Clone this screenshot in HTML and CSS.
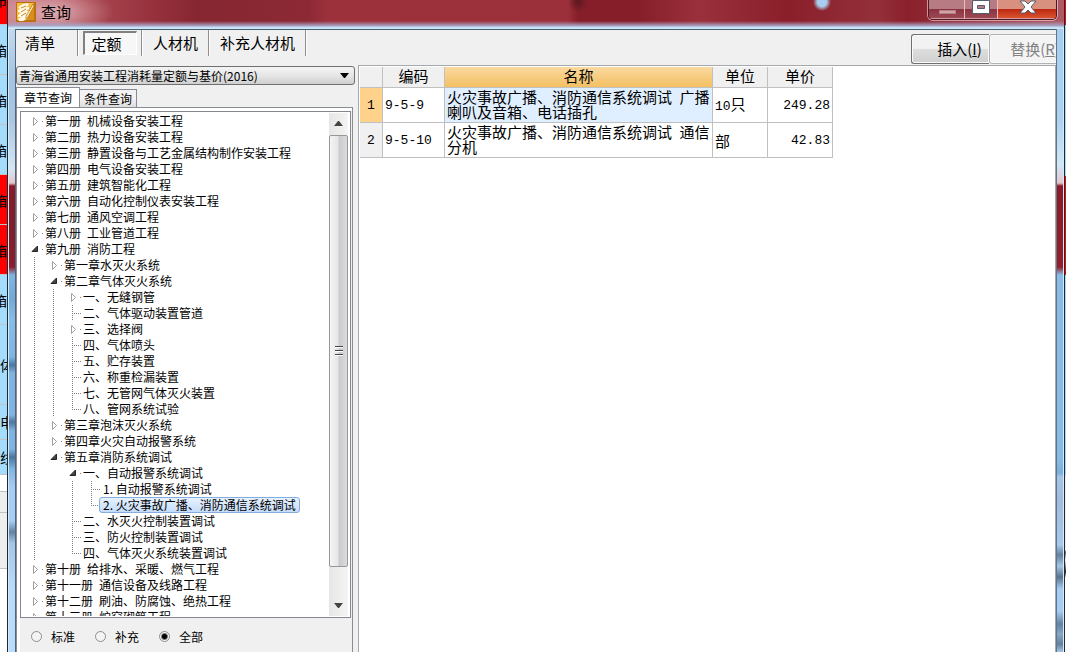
FILE: index.html
```
<!DOCTYPE html>
<html lang="zh-CN">
<head>
<meta charset="utf-8">
<title>查询</title>
<link rel="stylesheet" href="styles.css">
</head>
<body>
<div class="desktop">
  <div class="sheet" aria-hidden="true">
    <div class="cell red h25 up">布</div>
    <div class="cell h50">箱</div>
    <div class="cell h50">箱</div>
    <div class="cell h50">箱</div>
    <div class="cell red h50">箱</div>
    <div class="cell red h50">箱</div>
    <div class="cell h50">箱</div>
    <div class="cell h80 start">体</div>
    <div class="cell h35 start">电</div>
    <div class="cell h35 start">线</div>
    <div class="cell blank h17"></div>
    <div class="cell grey h21"></div>
    <div class="cell grey h56"></div>
  </div>
  <div class="window">
    <header class="titlebar">
      <svg class="app-icon" viewBox="0 0 20 20" aria-hidden="true">
        <rect width="20" height="20" fill="#b9720f"/>
        <rect x="1" y="1" width="17" height="17" fill="#f4bd43"/>
        <path d="M18 1v17H9z" fill="#d98f1c"/>
        <path d="M2 5l5-3 5-1 1 2-3 2 3 0 0 2-3 2 3 0 0 2-3 2 2 1-1 3-4 2-4 0-1-2 3-2-3 0 0-2 3-2-3-1 0-2 2-1z" fill="#fff8e6"/>
        <path d="M5 6l5-2M5 10l5-3M5 14l5-3" stroke="#c98a2a" fill="none"/>
        <path d="M17 2l1 2-6 11-2 2 0-3z" fill="#ffe9ad" stroke="#a8620a" stroke-width=".6"/>
      </svg>
      <h1>查询</h1>
      <div class="caption">
        <button class="min" aria-label="最小化"><svg viewBox="0 0 36 19"><rect x="10.500" y="10.500" width="16" height="3" fill="#d3a3a8" stroke="#b47e85"/></svg></button>
        <button class="max" aria-label="最大化"><svg viewBox="0 0 32 19"><path d="M7.500 .5h17v13h-17zM12.500 5.500v3h7v-3z" fill="#fff" fill-rule="evenodd" stroke="#555c70"/></svg></button>
        <button class="close" aria-label="关闭"><svg viewBox="0 0 58 19"><path d="M22 1h5l3 3 3-3h5l-5 6 5 6h-5l-3-3-3 3h-5l5-6z" fill="#fff" stroke="#555c70"/></svg></button>
      </div>
    </header>
    <div class="frame">
      <div class="edge edge-left"></div>
      <main class="client">
        <div class="toolbar">
          <nav class="modes">
            <span><button>清单</button></span>
            <span><button class="pressed">定额</button></span>
            <span><button>人材机</button></span>
            <span><button>补充人材机</button></span>
          </nav>
          <div class="actions">
            <button class="insert">插入(<u>I</u>)</button>
            <button class="replace" disabled>替换(<u>R</u>)</button>
          </div>
        </div>
        <div class="body">
          <aside class="side">
            <div class="combo">
              <select aria-label="定额库"><option>青海省通用安装工程消耗量定额与基价(2016)</option></select>
              <svg viewBox="0 0 9 5" aria-hidden="true"><path d="M0 0h9L5 5H4z"/></svg>
            </div>
            <div class="tabs">
              <button class="tab on">章节查询</button>
              <button class="tab">条件查询</button>
            </div>
            <div class="panel">
              <div class="treebox">
                <ul class="tree">
                  <li><p><i class="shut"></i>第一册&ensp;机械设备安装工程</p></li>
                  <li><p><i class="shut"></i>第二册&ensp;热力设备安装工程</p></li>
                  <li><p><i class="shut"></i>第三册&ensp;静置设备与工艺金属结构制作安装工程</p></li>
                  <li><p><i class="shut"></i>第四册&ensp;电气设备安装工程</p></li>
                  <li><p><i class="shut"></i>第五册&ensp;建筑智能化工程</p></li>
                  <li><p><i class="shut"></i>第六册&ensp;自动化控制仪表安装工程</p></li>
                  <li><p><i class="shut"></i>第七册&ensp;通风空调工程</p></li>
                  <li><p><i class="shut"></i>第八册&ensp;工业管道工程</p></li>
                  <li><p><i class="open"></i>第九册&ensp;消防工程</p>
                    <ul>
                      <li><p><i class="shut"></i>第一章水灭火系统</p></li>
                      <li><p><i class="open"></i>第二章气体灭火系统</p>
                        <ul>
                          <li><p><i class="shut"></i>一、无缝钢管</p></li>
                          <li><p><i class="leaf"></i>二、气体驱动装置管道</p></li>
                          <li><p><i class="shut"></i>三、选择阀</p></li>
                          <li><p><i class="leaf"></i>四、气体喷头</p></li>
                          <li><p><i class="leaf"></i>五、贮存装置</p></li>
                          <li><p><i class="leaf"></i>六、称重检漏装置</p></li>
                          <li><p><i class="leaf"></i>七、无管网气体灭火装置</p></li>
                          <li><p><i class="leaf"></i>八、管网系统试验</p></li>
                        </ul>
                      </li>
                      <li><p><i class="shut"></i>第三章泡沫灭火系统</p></li>
                      <li><p><i class="shut"></i>第四章火灾自动报警系统</p></li>
                      <li><p><i class="open"></i>第五章消防系统调试</p>
                        <ul>
                          <li><p><i class="open"></i>一、自动报警系统调试</p>
                            <ul>
                              <li><p><i class="leaf"></i><span class="item">1. 自动报警系统调试</span></p></li>
                              <li><p><i class="leaf"></i><span class="item chosen">2. 火灾事故广播、消防通信系统调试</span></p></li>
                            </ul>
                          </li>
                          <li><p><i class="leaf"></i>二、水灭火控制装置调试</p></li>
                          <li><p><i class="leaf"></i>三、防火控制装置调试</p></li>
                          <li><p><i class="leaf"></i>四、气体灭火系统装置调试</p></li>
                        </ul>
                      </li>
                    </ul>
                  </li>
                  <li><p><i class="shut"></i>第十册&ensp;给排水、采暖、燃气工程</p></li>
                  <li><p><i class="shut"></i>第十一册&ensp;通信设备及线路工程</p></li>
                  <li><p><i class="shut"></i>第十二册&ensp;刷油、防腐蚀、绝热工程</p></li>
                  <li><p><i class="shut"></i>第十三册&ensp;炉窑砌筑工程</p></li>
                </ul>
                <div class="scroll" aria-hidden="true">
                  <svg class="arrow" viewBox="0 0 9 5"><path d="M0 5h9L5 0H4z"/></svg>
                  <div class="thumb"><b></b><b></b><b></b></div>
                  <svg class="arrow" viewBox="0 0 9 5"><path d="M0 0h9L5 5H4z"/></svg>
                </div>
              </div>
              <div class="radios">
                <label><input type="radio" name="kind">标准</label>
                <label><input type="radio" name="kind">补充</label>
                <label><input type="radio" name="kind" checked>全部</label>
              </div>
            </div>
          </aside>
          <section class="results">
            <table>
              <colgroup><col class="c-no"><col class="c-code"><col class="c-name"><col class="c-unit"><col class="c-price"></colgroup>
              <thead><tr><th></th><th>编码</th><th class="sorted">名称</th><th>单位</th><th>单价</th></tr></thead>
              <tbody>
                <tr><th class="current num">1</th><td class="num">9-5-9</td><td class="name active">火灾事故广播、消防通信系统调试&ensp;广播喇叭及音箱、电话插孔</td><td><span class="num">10</span>只</td><td class="num price">249.28</td></tr>
                <tr><th class="num">2</th><td class="num">9-5-10</td><td class="name">火灾事故广播、消防通信系统调试&ensp;通信分机</td><td>部</td><td class="num price">42.83</td></tr>
              </tbody>
            </table>
          </section>
        </div>
      </main>
      <div class="edge edge-right"></div>
    </div>
  </div>
  <div class="sliver"></div>
</div>
</body>
</html>
```
FILE: styles.css
```
* { box-sizing: border-box; }

body {
  margin: 0;
  font: 12px/16px "Noto Sans CJK SC", sans-serif;
  color: #000;
}

button, select, input { font: inherit; color: inherit; margin: 0; padding: 0; }
ul { list-style: none; margin: 0; padding: 0; }
p, h1 { margin: 0; }

.desktop {
  display: grid;
  grid-template-columns: 7px minmax(0, 1fr) 1px;
  height: 100vh;
  overflow: hidden;
}

/* spreadsheet visible behind the dialog */
.sheet { overflow: hidden; background: #fff; }
.cell {
  display: flex;
  align-items: center;
  justify-content: flex-end;
  overflow: hidden;
  background: #a6dcfb;
  border-bottom: 1px solid #c2c2c2;
  font-size: 14px;
}
.red { background: #f00; }
.blank { background: #fff; }
.grey { background: #eee; }
.start { justify-content: flex-start; }
.up { align-items: flex-start; line-height: 0; }
.h17 { height: 17px; }
.h21 { height: 21px; }
.h25 { height: 25px; }
.h35 { height: 35px; }
.h50 { height: 50px; }
.h56 { height: 56px; }
.h80 { height: 80px; }

.window {
  display: flex;
  flex-direction: column;
  min-width: 0;
  min-height: 0;
  border: solid #1c2a33;
  border-width: 0 1px;
}

.titlebar {
  display: flex;
  flex: none;
  height: 29px;
  padding-left: 8px;
  background:
    linear-gradient(to bottom, transparent 21px, #a9a5c8 26px, #bddcf2 27px, #d7edf8 29px),
    radial-gradient(ellipse 60px 24px at 46px 12px, rgba(240, 205, 210, .7), transparent),
    radial-gradient(circle 9px at 814px 2px, #a9cdee 50%, transparent),
    radial-gradient(circle 10px at 570px 2px, #5d1822, transparent),
    linear-gradient(to right, #c98089, #a94751 80px, #95303b 150px, #862631 190px, #8c2935 300px, #9c313c 320px, #9b303b 560px, #861e29 570px, #861e29 630px, #99303b 690px, #8a1f2a 780px, #93303a 870px, #8a202c 900px, #ad5a64);
}
.app-icon { width: 20px; height: 20px; margin-top: 2px; }
.titlebar h1 { margin-left: 5px; font-size: 15px; font-weight: 400; line-height: 24px; }

.caption {
  display: flex;
  height: 20px;
  margin-left: auto;
  margin-right: 7px;
  border: solid #4c1a22;
  border-width: 0 1px 1px;
  border-radius: 0 0 5px 5px;
  box-shadow: 0 0 0 1px rgba(255, 220, 220, .6);
  overflow: hidden;
}
.caption button { border: 0; border-right: 1px solid #e7bdc2; box-shadow: inset 0 -1px #d59aa1; }
.caption button:last-child { border-right: 0; }
.caption svg { display: block; height: 19px; }
.min { width: 36px; background: linear-gradient(#b77b83 50%, #893440 50%, #a04c57); }
.max { width: 33px; background: linear-gradient(#b77b83 50%, #893440 50%, #a04c57); }
.close { width: 58px; background: linear-gradient(#d9917f 45%, #bd2913 50%, #dd5830); }

.frame { display: flex; flex: 1; min-height: 0; }
.edge { flex: none; width: 8px; }
.edge-left {
  border-left: 1px solid #d7eaf8;
  border-right: 1px solid #50647b;
  background: linear-gradient(#c1d9ed, #a3c4e2 50px, #a9c6e2 90px, #d7e6f2 140px, #e5c5cb 154px, #8c1926 157px, #7f1d2b 195px, #8d1c29 238px, #80b5e2 246px, #75a9d5 270px, #88bde8 290px, #80b5e2 328px, #4d769c 336px, #80b5e2 344px, #80b5e2 386px, #4d769c 393px, #80b5e2 402px, #80b5e2 420px, #4d769c 428px, #80b5e2 440px, #a6cdf3 458px, #a6cdf3 492px, #6482a1 503px, #a6c6e6 514px, #b9dcfd 560px, #b9dcfd);
}
.edge-right {
  border-left: 1px solid #5e7688;
  border-right: 1px solid #d7eaf8;
  background: linear-gradient(#a8cdef, #aed1f0 90px, #d3e7f5 136px, #e5c5cb 154px, #8c1926 157px, #921f2b 238px, #8bbce8 246px, #88bbe5 430px, #7bafdb 444px, #a6c6e8 448px, #a3bbdc 470px, #a6c9ed 516px, #667f9c 526px, #a6c6e6 537px, #5a738e 548px, #a6cdf3 560px, #a6cdf3 582px, #6482a1 595px, #88a7c6 605px, #667f9c 615px, #a6c6e6);
}
.sliver { background: linear-gradient(#f00 25px, #a6dcfb 25px, #a6dcfb 176px, #f00 176px, #f00 275px, #a6dcfb 275px, #a6dcfb 475px, #eee 475px, #eee 550px, #555 552px, #fff 560px, #222 572px, #fff 578px); }

.client {
  display: flex;
  flex: 1;
  flex-direction: column;
  min-width: 0;
  border-top: 1px solid #435e70;
  background: #f0f0f0;
}

.toolbar { display: flex; flex: none; justify-content: space-between; height: 35px; font-size: 15px; }
.modes { display: flex; height: 26px; }
.modes span {
  display: flex;
  padding: 1px 4px;
  border-right: 1px solid #8e8e8e;
  box-shadow: 1px 0 #fff;
}
.modes span:first-child { padding-right: 17px; }
.modes span:nth-child(2) { padding-left: 5px; }
.modes span:last-child { padding-left: 6px; padding-right: 5px; }
.modes button { padding: 0 5px; border: 0; background: none; line-height: 22px; white-space: nowrap; }
.modes span:nth-child(3) button { padding: 0 6px 0 7px; }
.modes .pressed {
  width: 54px;
  padding: 0 12px 0 4px;
  border: 1px solid #fff;
  border-top: 2px solid #808080;
  border-left: 2px solid #808080;
  background: #f7f7f7;
}
.actions { display: flex; width: 145px; padding: 4px 0 1px; overflow: hidden; }
.actions button {
  flex: none;
  width: 78px;
  padding-left: 18px;
  border: 1px solid #707070;
  border-radius: 3px;
  background: linear-gradient(#f2f2f2 48%, #dedede 50%, #d0d0d0);
  box-shadow: inset 0 0 0 1px #fafafa;
  white-space: nowrap;
}
.actions .insert { border-right: 0; border-radius: 3px 0 0 3px; }
.actions .replace { padding-left: 14px; border-color: #adb2b5; background: #f4f4f4; color: #838383; }

.body { display: flex; flex: 1; min-height: 0; }

.side { display: flex; flex: none; flex-direction: column; width: 342px; padding: 1px 5px 0 0; }
.combo { position: relative; flex: none; height: 19px; margin-right: -2px; }
.combo select {
  display: block;
  width: 100%;
  height: 19px;
  padding: 0 24px 0 2px;
  border: 1px solid #707070;
  border-radius: 3px;
  background: linear-gradient(#f4f4f4, #e6e6e6 50%, #cfcfcf);
  line-height: 16px;
  appearance: none;
}
.combo svg { position: absolute; top: 7px; right: 6px; width: 9px; height: 5px; }

.tabs { display: flex; flex: none; align-items: flex-end; height: 22px; padding-top: 2px; }
.tab { width: 57px; height: 18px; border: 1px solid #898c95; border-left: 0; border-bottom: 0; background: linear-gradient(#f2f2f2 50%, #dcdcdc); line-height: 16px; white-space: nowrap; }
.tab.on { width: 64px; height: 20px; border-left: 1px solid #898c95; background: #fff; }

.panel {
  display: flex;
  flex: 1;
  flex-direction: column;
  min-height: 0;
  padding: 3px 0 0 3px;
  border: solid #898c95;
  border-width: 1px 1px 0;
  background: linear-gradient(#fff, #fff) left top / 100% 3px no-repeat, linear-gradient(#fff, #fff) left top / 3px 100% no-repeat, #f0f0f0;
}
.treebox {
  display: flex;
  flex: 1;
  min-height: 0;
  margin-right: 1px;
  padding: 1px 2px 1px 1px;
  border: 1px solid #828790;
  background: #fff;
  overflow: hidden;
}
.tree { flex: 1; padding-left: 8px; overflow: hidden; white-space: nowrap; }
.tree p { display: flex; height: 16px; }
.tree i { flex: none; width: 15px; background-repeat: no-repeat; }

/* nested level, with a dotted guide joining the siblings of its parent */
.tree ul { padding-left: 19px; }
.tree li:not(:last-child) > ul {
  background: repeating-linear-gradient(#808080 0 1px, transparent 1px 2px) 4px 0 / 1px 100% no-repeat;
}
.shut {
  background-image:
    url("data:image/svg+xml,%3Csvg xmlns='http://www.w3.org/2000/svg' width='16' height='16'%3E%3Cpath d='M3.500 4.500v8l4-4z' fill='%23fff' stroke='%23a0a0a0'/%3E%3Cpath d='M12 8h1v1h-1z' fill='%23808080'/%3E%3C/svg%3E");
}
.open {
  background-image:
    url("data:image/svg+xml,%3Csvg xmlns='http://www.w3.org/2000/svg' width='16' height='16'%3E%3Cpath d='M7.500 5v5.500H2z' fill='%23444' stroke='%23262626'/%3E%3Cpath d='M12 8h1v1h-1z' fill='%23808080'/%3E%3C/svg%3E");
}
.leaf {
  background-image:
    repeating-linear-gradient(#808080 0 1px, transparent 1px 2px),
    repeating-linear-gradient(to right, #808080 0 1px, transparent 1px 2px);
  background-size: 1px 100%, 9px 1px;
  background-position: 4px 0, 4px 8px;
}
li:last-child > p > .leaf { background-size: 1px 9px, 9px 1px; }
.item { padding: 0 3px; border: 1px solid transparent; margin-left: -3px; line-height: 14px; }
.chosen { border-color: #84acdd; border-radius: 3px; background: linear-gradient(#e6f1fd, #c5dcfa); }

.scroll { display: flex; flex: none; flex-direction: column; align-items: center; width: 19px; padding: 8px 0; background: linear-gradient(to right, #e6e6e6, #f4f4f4); }
.arrow { flex: none; width: 9px; height: 5px; fill: #444; }
.thumb {
  display: flex;
  flex: 1;
  flex-direction: column;
  align-items: center;
  justify-content: center;
  gap: 2px;
  width: 19px;
  margin: 9px 0 36px;
  border: 1px solid #979797;
  border-radius: 2px;
  background: linear-gradient(to right, #f5f5f5, #e6e6e8 45%, #c9cacc 55%, #dcdcde);
}
.thumb b { width: 8px; height: 2px; border-top: 1px solid #444; background: #fff; }

.radios { display: flex; flex: none; gap: 20px; height: 33px; padding: 2px 0 0 11px; margin-top: 1px; align-items: center; }
.radios label { display: flex; align-items: center; gap: 9px; }
.radios input {
  width: 11px;
  height: 11px;
  border: 1px solid #8e8f8f;
  border-radius: 50%;
  background: #f4f4f4;
  appearance: none;
}
.radios input:checked { background: radial-gradient(circle, #000 2px, #f4f4f4 4px); }

.results {
  flex: 1;
  min-width: 0;
  padding: 1px 0 0 1px;
  border: solid #a5a8ad;
  border-width: 1px 1px 0;
  background: #fff;
}
table { border-collapse: separate; border-spacing: 0; table-layout: fixed; width: 473px; font-size: 15px; line-height: 15px; }
.c-no { width: 23px; }
.c-code { width: 62px; }
.c-name { width: 268px; }
.c-unit { width: 55px; }
.c-price { width: 65px; }
th, td { height: 35px; padding: 0 2px; border: solid #c0c0c0; border-width: 0 1px 1px 0; font-weight: 400; text-align: left; vertical-align: middle; }
th { padding: 0; background: #f0f0f0; text-align: center; }
thead th { height: 21px; padding-bottom: 3px; }
.sorted { background: linear-gradient(#fad9a0, #f3c062); }
.current { background: #ffd28c; }
.active { background: #e0efff; }
.name { padding-right: 0; padding-bottom: 3px; }
.num { font-family: "Liberation Mono", monospace; font-size: 13px; }
.price { text-align: right; }
```
